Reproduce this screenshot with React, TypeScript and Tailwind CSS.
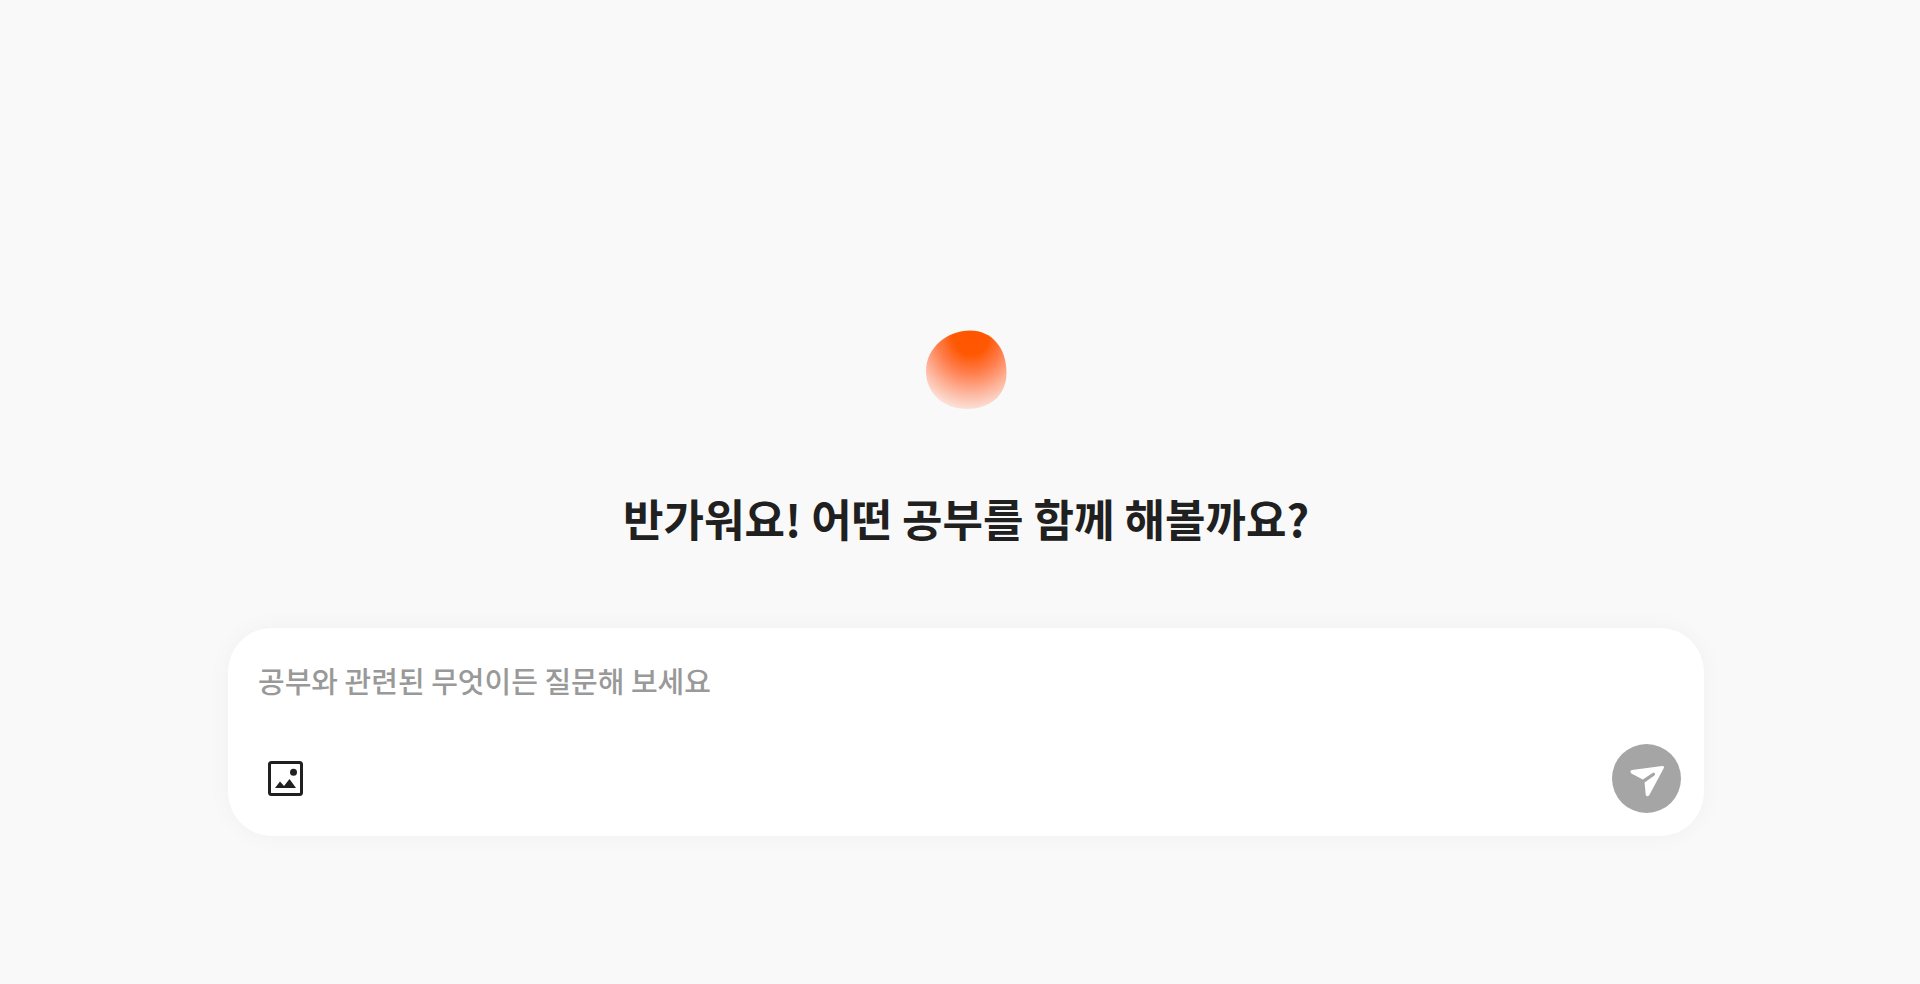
import { useState } from 'react';

function Orb() {
  return (
    <svg viewBox="0 0 82 80" className="h-20 w-[82px]" aria-hidden="true">
      <defs>
        <radialGradient id="orb" gradientUnits="userSpaceOnUse" cx="46" cy="4" r="78" gradientTransform="translate(46 4) scale(0.88 1) translate(-46 -4)">
          <stop offset="0" stopColor="#ff5500" />
          <stop offset="0.27" stopColor="#ff5803" />
          <stop offset="0.5" stopColor="#ff7d4c" />
          <stop offset="0.75" stopColor="#fdb399" />
          <stop offset="1" stopColor="#fbe8e2" />
        </radialGradient>
      </defs>
      <path
        d="M45 0.5C67 0.5 81.5 18 81.5 43C81.5 66 64 79 42 79C18 79 1 63 1 41C1 17 23 0.5 45 0.5Z"
        fill="url(#orb)"
      />
    </svg>
  );
}

function ImageIcon() {
  return (
    <svg viewBox="0 0 35 35" className="size-[35px]" aria-hidden="true">
      <rect x="1.5" y="1.5" width="32" height="32" rx="2" fill="none" stroke="#202020" strokeWidth="3" />
      <circle cx="25.5" cy="11.2" r="3.5" fill="#202020" />
      <path d="M7 27L12 20.5L16 25L21.5 18L28 27Z" fill="#202020" />
    </svg>
  );
}

function SendIcon() {
  return (
    <svg viewBox="0 0 69 69" className="size-full" aria-hidden="true">
      <path
        d="M20 26L50 22Q53 21.7 51.6 24.6L37.2 51.2Q35 53.6 33.7 50.8L32.6 38.6L42.4 31.4Q43.6 30.2 42.8 29.2Q41.8 28.2 40.6 28.9L30.8 35.6L19.4 29.4Q17.2 26.8 20 26Z"
        fill="#fff"
      />
    </svg>
  );
}

export default function App() {
  const [question, setQuestion] = useState('');
  return (
    <main className="flex min-h-screen flex-col items-center bg-[#f9f9f9] pt-[330px] pr-[216px] pb-16 pl-[228px] font-['Noto_Sans_CJK_KR',sans-serif]">
      <Orb />
      <h1 className="mt-19 text-center text-[44px] leading-16 font-bold text-[#202020]">
        반가워요! 어떤 공부를 함께 해볼까요?
      </h1>
      <form
        onSubmit={(e) => e.preventDefault()}
        className="mt-[78px] flex w-full flex-col rounded-[44px] bg-white pt-[30px] pr-[23px] pb-[23px] pl-[30px] shadow-[0_0_24px_rgba(0,0,0,0.04)]"
      >
        <input
          type="text"
          aria-label="질문"
          value={question}
          onChange={(e) => setQuestion(e.target.value)}
          placeholder="공부와 관련된 무엇이든 질문해 보세요"
          className="h-11 w-full bg-transparent text-[29px] leading-11 font-medium text-[#202020] outline-none placeholder:text-[#999999]"
        />
        <div className="mt-[42px] flex items-center justify-between pl-[10px]">
          <button type="button" aria-label="이미지 추가">
            <ImageIcon />
          </button>
          <button type="submit" aria-label="보내기" className="size-[69px] rounded-full bg-[#a5a5a5]">
            <SendIcon />
          </button>
        </div>
      </form>
    </main>
  );
}
